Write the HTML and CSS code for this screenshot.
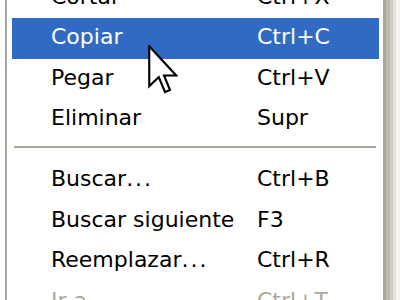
FILE: index.html
```html
<!DOCTYPE html>
<html lang="es">
<head>
<meta charset="utf-8">
<title>Menú Edición</title>
<link rel="stylesheet" href="styles.css">
</head>
<body>
<div class="screen">
  <div class="menu">
    <div class="item"><span>Cortar</span><span>Ctrl+X</span></div>
    <div class="item selected"><span>Copiar</span><span>Ctrl+C</span></div>
    <div class="item"><span>Pegar</span><span>Ctrl+V</span></div>
    <div class="item"><span>Eliminar</span><span>Supr</span></div>
    <div class="sep"></div>
    <div class="item"><span>Buscar<span class="dots">...</span></span><span>Ctrl+B</span></div>
    <div class="item"><span>Buscar siguiente</span><span>F3</span></div>
    <div class="item"><span>Reemplazar<span class="dots">...</span></span><span>Ctrl+R</span></div>
    <div class="item disabled"><span>Ir a<span class="dots">...</span></span><span>Ctrl+T</span></div>
  </div>
  <div class="shadow"></div>
  <svg class="cursor" width="30" height="50" viewBox="0 0 12 20">
    <path d="M0.5 0.5 L0.5 16.5 L4.3 12.8 L6.8 18.8 L8.8 18 L6.4 12.2 L11.3 12.2 Z" fill="#fff" stroke="#000" stroke-width="0.85" stroke-linejoin="miter"/>
  </svg>
</div>
</body>
</html>
```
FILE: styles.css
```css
html, body {
  margin: 0;
  padding: 0;
  background: #fff;
  overflow: hidden;
}
.screen {
  position: relative;
  width: 400px;
  height: 300px;
  overflow: hidden;
  display: flex;
  padding-left: 5px;
  box-sizing: border-box;
  font-family: "DejaVu Sans", sans-serif;
  font-size: 22px;
}
.menu {
  width: 381px;
  box-sizing: border-box;
  flex: none;
  border-left: 2px solid #aca899;
  border-right: 3px solid #aca899;
  padding: 0 4px 0 5px;
  margin-top: -22.5px;
  background: #fff;
  height: 360px;
}
.item {
  display: grid;
  grid-template-columns: 206px 1fr;
  padding-left: 39px;
  height: 40.5px;
  line-height: 38.5px;
  padding-bottom: 2px;
  box-sizing: border-box;
  color: #000;
  white-space: nowrap;
}
.item.selected {
  background: #316ac5;
  color: #fff;
}
.item.disabled {
  color: #aca899;
}
.dots {
  letter-spacing: 2px;
}
.sep {
  height: 2px;
  background: #aca899;
  margin: 6.5px 3px 12px 2px;
}
.shadow {
  width: 14px;
  flex: none;
  background: linear-gradient(to right, #bdbab2 0 4px, #d0cec8 4px 7px, #e4e3e0 7px 10px, #f4f4f3 10px 14px);
}
.cursor {
  position: absolute;
  left: 148px;
  top: 45px;
}
```
